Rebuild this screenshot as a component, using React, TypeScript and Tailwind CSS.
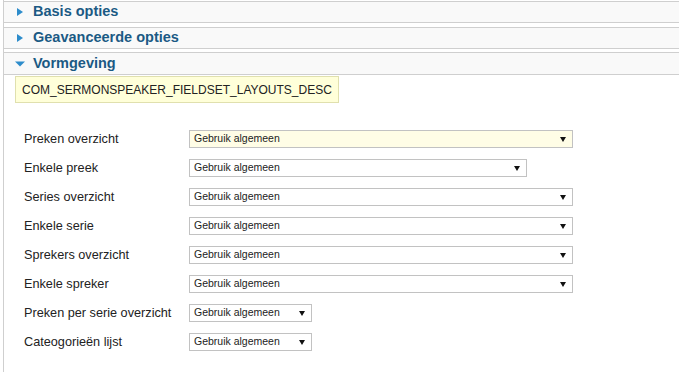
import React from 'react';

const ROWS: { label: string; width: number; focus?: boolean }[] = [
  { label: 'Preken overzicht', width: 384, focus: true },
  { label: 'Enkele preek', width: 338 },
  { label: 'Series overzicht', width: 384 },
  { label: 'Enkele serie', width: 384 },
  { label: 'Sprekers overzicht', width: 384 },
  { label: 'Enkele spreker', width: 384 },
  { label: 'Preken per serie overzicht', width: 123 },
  { label: 'Cateogorieën lijst', width: 123 },
];

const Arrow: React.FC<{ open?: boolean }> = ({ open }) => (
  <svg width="10" height="10" viewBox="0 0 10 10" className="shrink-0">
    {open ? <polygon points="0,2.5 10,2.5 5,7.5" fill="#2d8ccb" /> : <polygon points="2,1 8,5 2,9" fill="#2d8ccb" />}
  </svg>
);

const Header: React.FC<{ title: string; open?: boolean; className?: string }> = ({ title, open, className }) => (
  <div className={`flex items-center gap-[8px] border-y border-[#cfcfcf] bg-[#f9f9f9] pl-[11px] ${className ?? ''}`}>
    <Arrow open={open} />
    <span className="text-[14.5px] font-bold text-[#1b5a84]">{title}</span>
  </div>
);

const Select: React.FC<{ width: number; focus?: boolean }> = ({ width, focus }) => (
  <div
    style={{ width }}
    className={`flex h-[18px] items-center justify-between border border-[#c2c2c2] pl-[4px] pr-[6px] text-[10.5px] text-[#222] ${focus ? 'bg-[#fffde6]' : 'bg-white'}`}
  >
    <span>Gebruik algemeen</span>
    <svg width="6" height="5" viewBox="0 0 6 5">
      <polygon points="0,0 6,0 3,5" fill="#111" />
    </svg>
  </div>
);

export default function App() {
  return (
    <div className="h-[372px] w-[679px] overflow-hidden bg-white" style={{ fontFamily: '"Liberation Sans", Arial, sans-serif' }}>
      <div className="ml-[3px] h-full border-l border-[#cfcfcf] pt-[1px]">
        <Header title="Basis opties" className="h-[22px]" />
        <Header title="Geavanceerde opties" className="mt-[4px] h-[22px]" />
        <Header title="Vormgeving" open className="mt-[3px] h-[23px]" />

        <div className="ml-[11px] mt-[1px] inline-flex h-[27px] items-center border border-[#e0e0ae] bg-[#ffffd9] px-[6px] text-[12px] text-[#222]">
          COM_SERMONSPEAKER_FIELDSET_LAYOUTS_DESC
        </div>

        <div className="mt-[27px] flex flex-col gap-[11px] pl-[20px]">
          {ROWS.map(r => (
            <div key={r.label} className="flex h-[18px] items-center">
              <div className="w-[165px] text-[12.7px] leading-[18px] text-[#222]">{r.label}</div>
              <Select width={r.width} focus={r.focus} />
            </div>
          ))}
        </div>
      </div>
    </div>
  );
}
